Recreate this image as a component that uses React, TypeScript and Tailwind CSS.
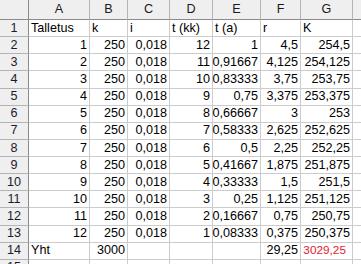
import React from "react";

const cols = ["A", "B", "C", "D", "E", "F", "G", "H"];

type Cell = { v: string; left?: boolean; red?: boolean };

const e = ["1", "0,91667", "0,83333", "0,75", "0,66667", "0,58333", "0,5", "0,41667", "0,33333", "0,25", "0,16667", "0,08333"];
const f = ["4,5", "4,125", "3,75", "3,375", "3", "2,625", "2,25", "1,875", "1,5", "1,125", "0,75", "0,375"];
const g = ["254,5", "254,125", "253,75", "253,375", "253", "252,625", "252,25", "251,875", "251,5", "251,125", "250,75", "250,375"];

const rows: Cell[][] = [
  [
    { v: "Talletus", left: true },
    { v: "k", left: true },
    { v: "i", left: true },
    { v: "t (kk)", left: true },
    { v: "t (a)", left: true },
    { v: "r", left: true },
    { v: "K", left: true },
    { v: "" },
  ],
  ...e.map((_, i) => [
    { v: String(i + 1) },
    { v: "250" },
    { v: "0,018" },
    { v: String(12 - i) },
    { v: e[i] },
    { v: f[i] },
    { v: g[i] },
    { v: "" },
  ]),
  [
    { v: "Yht", left: true },
    { v: "3000" },
    { v: "" },
    { v: "" },
    { v: "" },
    { v: "29,25" },
    { v: "3029,25", red: true },
    { v: "" },
  ],
  [{ v: "" }, { v: "" }, { v: "" }, { v: "" }, { v: "" }, { v: "" }, { v: "" }, { v: "" }],
];

export default function App() {
  return (
    <div className="w-[361px] h-[264px] overflow-hidden bg-white font-['Liberation_Sans',Arial,sans-serif] text-[12.6px] text-black">
      <div className="grid grid-cols-[29px_61px_38px_42px_43px_48px_40px_52px_60px] grid-rows-[20px_repeat(15,17.14px)]">
        {/* corner + column headers */}
        <div className="bg-[#efefef] border-r border-b border-[#8a8a8a]" />
        {cols.map((c) => (
          <div
            key={c}
            className="flex items-center justify-center bg-[#efefef] border-r border-r-[#b4b4b4] border-b border-b-[#8a8a8a] text-[#1a1a1a]"
          >
            {c}
          </div>
        ))}

        {rows.map((row, r) => (
          <React.Fragment key={r}>
            <div className="flex items-center justify-center bg-[#efefef] border-r border-r-[#8a8a8a] border-b border-b-[#b4b4b4] text-[#1a1a2e]">
              {r + 1}
            </div>
            {row.map((cell, c) => (
              <div
                key={c}
                className={
                  "flex items-center whitespace-nowrap border-r border-b border-[#cccccc] " +
                  (cell.left ? "justify-start pl-[2px]" : "justify-end pr-[2px]") +
                  (cell.red ? " text-[#e8192c] text-[11.8px] pr-[6px]" : "")
                }
              >
                {cell.v}
              </div>
            ))}
          </React.Fragment>
        ))}
      </div>
    </div>
  );
}
